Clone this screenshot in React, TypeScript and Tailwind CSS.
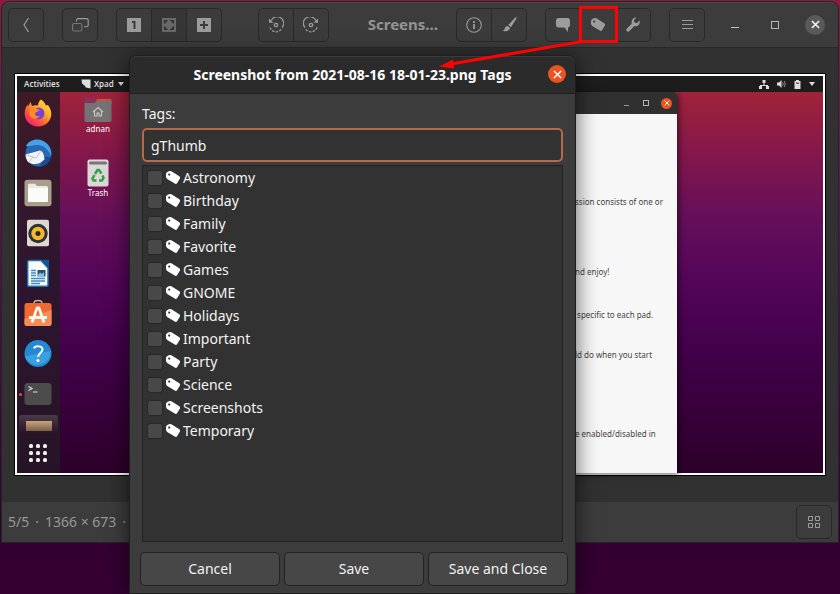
import type { ReactNode } from 'react';

const TAGS = [
  'Astronomy',
  'Birthday',
  'Family',
  'Favorite',
  'Games',
  'GNOME',
  'Holidays',
  'Important',
  'Party',
  'Science',
  'Screenshots',
  'Temporary',
];

const PAD_LINES = [
  { text: 'ssion consists of one or', gap: 'mt-[82px]' },
  { text: 'nd enjoy!', gap: 'mt-[58px]' },
  { text: ' specific to each pad.', gap: 'mt-[31px]' },
  { text: 'ld do when you start', gap: 'mt-[28px]' },
  { text: 'e enabled/disabled in', gap: 'mt-[67px]' },
];

function TagIcon({ className }: { className?: string }) {
  return (
    <svg width="14" height="13" viewBox="0 0 14 13" className={className}>
      <path
        fill="currentColor"
        fillRule="evenodd"
        d="M1.800.7C3.200-.1 5-.1 6.200.7l7.100 4.600c.8.6 1 1.500.5 2.400l-2.600 4.400c-.5.900-1.500 1.100-2.400.500L1.200 8C.4 7.400 0 6.600 0 5.600V3C0 2 .8 1.200 1.800.7zM3.200 2.500a1.100 1.100 0 1 0 0 2.200 1.100 1.100 0 0 0 0-2.200z"
      />
    </svg>
  );
}

function ToolButton({ label, active, children }: { label: string; active?: boolean; children: ReactNode }) {
  return (
    <button
      type="button"
      aria-label={label}
      className={`flex h-full w-[34px] items-center justify-center first:rounded-l-[4px] last:rounded-r-[4px] ${active ? 'bg-[#363636] text-[#686868]' : 'bg-[#3c3c3c] text-[#9c9c9c]'}`}
    >
      {children}
    </button>
  );
}

function Group({ children, className = '' }: { children: ReactNode; className?: string }) {
  return (
    <div className={`flex h-[34px] shrink-0 gap-px rounded-[5px] border border-[#292929] bg-[#292929] ${className}`}>
      {children}
    </div>
  );
}

function RotateIcon({ flip }: { flip?: boolean }) {
  return (
    <svg width="16" height="16" viewBox="0 0 16 16" fill="none" stroke="currentColor" className={flip ? '-scale-x-100' : ''}>
      <path d="M3.200 3.600A6.500 6.500 0 1 1 14 10.500" strokeWidth="1.200" />
      <path d="M2 10.500A6.500 6.500 0 0 0 13.500 12" strokeWidth="1.200" strokeDasharray="2.500 1.200" />
      <path d="M1 1.500v4.300h4.500z" fill="currentColor" stroke="none" />
      <circle cx="8" cy="8" r="1.700" strokeWidth="1.300" />
    </svg>
  );
}

function CloseCross({ size }: { size: number }) {
  return (
    <svg width={size} height={size} viewBox="0 0 10 10" stroke="#fff" strokeWidth="1.600">
      <path d="M1 1l8 8M9 1L1 9" />
    </svg>
  );
}

function HeaderBar() {
  return (
    <header className="flex h-[46px] items-center gap-[18px] border-b border-[#292929] bg-[#3c3c3c] pl-[6px] pr-[13px] shadow-[inset_0_1px_0_#474747]">
      <Group>
        <ToolButton label="Back">
          <svg width="8" height="16" viewBox="0 0 8 16" fill="none" stroke="currentColor" strokeWidth="1.200">
            <path d="M6.500 1L2 8l4.500 7" />
          </svg>
        </ToolButton>
      </Group>
      <Group>
        <ToolButton label="Switch view">
          <svg width="17" height="14" viewBox="0 0 17 14" fill="none" stroke="currentColor" strokeWidth="1.100">
            <path d="M4.500 3.500V2.200C4.500 1.200 5 .6 6 .6h8.500c1 0 1.700.6 1.700 1.600v5c0 1-.7 1.600-1.700 1.600H12" />
            <rect x=".6" y="5.500" width="9.300" height="7.500" rx="1.500" stroke="#777" />
          </svg>
        </ToolButton>
      </Group>
      <Group>
        <ToolButton label="Zoom 100%">
          <svg width="14" height="14" viewBox="0 0 14 14">
            <path fill="currentColor" fillRule="evenodd" d="M0 0h14v14H0zM5 3v2h1.500v6h2V3z" />
          </svg>
        </ToolButton>
        <ToolButton label="Fit to window" active>
          <svg width="14" height="14" viewBox="0 0 14 14">
            <path fill="currentColor" d="M0 0h14v14H0z" />
            <path fill="#363636" d="M2 2h4L5 3.500 3.500 5 2 6zM12 2v4l-1.500-1L9 3.500 8 2zM12 12H8l1-1.500L10.500 9 12 8zM2 12V8l1.500 1L5 10.500 6 12z" />
            <path fill="currentColor" d="M4.500 4.500h5v5h-5z" />
          </svg>
        </ToolButton>
        <ToolButton label="Zoom in">
          <svg width="14" height="14" viewBox="0 0 14 14">
            <path fill="currentColor" fillRule="evenodd" d="M0 0h14v14H0zM6 3v3H3v2h3v3h2V8h3V6H8V3z" />
          </svg>
        </ToolButton>
      </Group>
      <Group className="ml-[18px]">
        <ToolButton label="Rotate left">
          <RotateIcon />
        </ToolButton>
        <ToolButton label="Rotate right">
          <RotateIcon flip />
        </ToolButton>
      </Group>
      <h1 className="min-w-0 flex-1 whitespace-nowrap text-right text-[15px] font-bold text-[#949494]">Screens...</h1>
      <Group>
        <ToolButton label="Properties">
          <svg width="16" height="16" viewBox="0 0 16 16" fill="none" stroke="currentColor">
            <circle cx="8" cy="8" r="7.300" strokeWidth="1.100" />
            <path d="M8 7v5M8 4v2" strokeWidth="1.800" />
          </svg>
        </ToolButton>
        <ToolButton label="Edit picture">
          <svg width="15" height="15" viewBox="0 0 15 15" fill="currentColor">
            <path d="M13.200.4c.8-.7 1.700.1 1.200 1L9 10.200 6.300 8.100z" />
            <path d="M5.700 8.900l2.400 2c-.3 2.500-3.500 3.700-7.600 3.200 1.500-.4 1.900-1.200 2.200-2.500.3-1.600 1.500-2.700 3-2.700z" />
          </svg>
        </ToolButton>
      </Group>
      <div className="relative">
        <Group>
          <ToolButton label="Comment">
            <svg width="14" height="14" viewBox="0 0 14 14" fill="currentColor">
              <path d="M2.500 0h9C13 0 14 1 14 2.500V7c0 1.500-1 2.500-2.500 2.500H12V14L8.500 9.500h-6C1 9.500 0 8.500 0 7V2.500C0 1 1 0 2.500 0z" />
            </svg>
          </ToolButton>
          <ToolButton label="Tags">
            <TagIcon />
          </ToolButton>
          <ToolButton label="Tools">
            <svg width="14" height="15" viewBox="0 0 14 15" fill="currentColor">
              <path d="M10.500.6L8 3l.4 2.600 2.600.5 2.600-2.500c.8 3-.9 5.500-3.600 5.700-.8.100-1.300 0-1.700-.200L3.500 14c-.8.900-2 .9-2.700.2-.8-.8-.7-1.900.2-2.700l4.700-4.800C4.900 3 7.500 0 10.500.6z" />
            </svg>
          </ToolButton>
        </Group>
        {/* red marker round the tag button, with its pointer to the dialog */}
        <div className="pointer-events-none absolute -top-[2px] left-[34px] z-20 h-[37px] w-[39px] border-[3px] border-[#fd0303]">
          <svg width="144" height="30" viewBox="0 0 144 30" className="absolute -left-[143px] top-[30px] max-w-none">
            <path d="M143 2.500L12 25" stroke="#fd0303" strokeWidth="3" />
            <path d="M0 27.500l14-7 1 9z" fill="#fd0303" />
          </svg>
        </div>
      </div>
      <Group>
        <ToolButton label="Menu">
          <svg width="11" height="10" viewBox="0 0 11 10" stroke="currentColor">
            <path d="M0 .5h11M0 4.500h11M0 8.500h11" />
          </svg>
        </ToolButton>
      </Group>
      <div className="flex shrink-0 items-center gap-5 pl-[2px]">
        <button type="button" aria-label="Minimize" className="flex size-5 items-end justify-center pb-[7px]">
          <span className="h-px w-2 bg-[#c0c0c0]" />
        </button>
        <button type="button" aria-label="Maximize" className="flex size-5 items-center justify-center">
          <span className="size-2 border border-[#b8b8b8]" />
        </button>
        <button type="button" aria-label="Close" className="flex size-5 items-center justify-center rounded-full bg-[#5a5a5a]">
          <CloseCross size={9} />
        </button>
      </div>
    </header>
  );
}

function DockIcon({ name }: { name: string }) {
  return (
    <svg width="28" height="28" viewBox="0 0 28 28">
      {name === 'firefox' && (
        <>
          <defs>
            <linearGradient id="fox" x1="1" y1="0" x2=".2" y2="1">
              <stop offset="0" stopColor="#fff04a" />
              <stop offset=".4" stopColor="#ffb029" />
              <stop offset=".7" stopColor="#ff5a35" />
              <stop offset="1" stopColor="#f01480" />
            </linearGradient>
          </defs>
          <path
            fill="url(#fox)"
            d="M17 .5c3 2 4 4 5 6l2-.5c2 3 3.500 6 3.300 9.500C27 22 21.500 27.500 14 27.500S.7 22 .7 14.500C.7 10.500 2 8 3.500 5.500l.5 2L6.500 3l1.500 4c2-1 4-1 6-.5 0-2 1-4.500 3-6z"
          />
          <circle cx="14.500" cy="14.500" r="6" fill="#7c3fd4" />
          <path fill="#ff8a28" d="M6 9c3-1 5-1 7 1l3 1-5 3c0 3 2 4 5 3-3 4-8 3-10 0-1.500-2.500-1-5 0-8z" />
        </>
      )}
      {name === 'mail' && (
        <>
          <circle cx="14.500" cy="14.500" r="13" fill="#2868b4" />
          <path fill="#45a2e8" d="M2 7C5 1 13-1 19 2c6 3 9 9 8 15-2-6-8-12-15-11-4 0-7 2-10 1z" />
          <path fill="#1b4b92" d="M20 18l7 0c-1 5-5 9-11 10z" />
          <path fill="#f3f4f7" d="M1.500 15.500L16 11.500c2 0 4 3 4.500 9L16 24c-5 2-9 1-12-1-1.500-2-2.500-5-2.500-7.500z" />
          <path fill="none" stroke="#b9c3d3" d="M2 16l10 3 5-7M5 23l4-5" />
        </>
      )}
      {name === 'files' && (
        <>
          <rect x=".5" y=".8" width="27" height="26.500" rx="3" fill="#a99d8b" />
          <path fill="#ece9e4" d="M4 6c0-.8.5-1.200 1.200-1.200h6L13 7h9.500c1 0 1.500.5 1.500 1.500v13c0 1-.5 1.500-1.500 1.500h-17c-1 0-1.500-.5-1.500-1.500z" />
          <path fill="#fbfbfa" d="M4 9h20v12.500c0 1-.5 1.500-1.500 1.500h-17c-1 0-1.500-.5-1.500-1.500z" />
        </>
      )}
      {name === 'music' && (
        <>
          <rect x="3" y=".8" width="22" height="26.500" rx="2" fill="#ded9d0" />
          <circle cx="14" cy="14.500" r="9.700" fill="#2e3035" />
          <circle cx="14" cy="14.500" r="6.700" fill="#f4b92b" />
          <circle cx="14" cy="14.500" r="2.500" fill="#26272b" />
        </>
      )}
      {name === 'writer' && (
        <>
          <path fill="#fafafa" stroke="#1b72b8" strokeWidth="1.500" d="M5 1.500h12l7 7.500v17c0 .8-.5 1.300-1.300 1.300H5c-.8 0-1.300-.5-1.300-1.300V3c0-.8.5-1.500 1.300-1.500z" />
          <path fill="#14588f" d="M17.500.7H25V8.500z" />
          <path stroke="#3b8ccb" strokeWidth="1.500" d="M7 11.500h5M7 14h5M7 16.500h5M7 19.500h14M7 22h14M7 24.500h9" />
          <path fill="#354d65" d="M13.500 11h8v6.500h-8z" />
          <path fill="#7ec1f5" d="M14 16l2-2.500 2 1.500 2-2v4.500h-6z" />
        </>
      )}
      {name === 'software' && (
        <>
          <path fill="none" stroke="#c6b495" strokeWidth="1.500" d="M10 5.500V4C10 .5 18 .5 18 4v1.500" />
          <rect x=".5" y="4" width="27" height="23" rx="2.500" fill="#f0692f" />
          <path fill="#f58c57" d="M.5 20l27-9v13.500c0 1.500-1 2.500-2.500 2.500H3c-1.500 0-2.500-1-2.500-2.500z" />
          <path fill="none" stroke="#fff6ee" strokeWidth="2.800" strokeLinejoin="round" d="M8 23.500l5-14.500h2l5 14.500M5 18.500h18" />
        </>
      )}
      {name === 'help' && (
        <>
          <circle cx="14" cy="14.500" r="13.500" fill="#2489d4" />
          <path fill="#3a9fe3" d="M.7 17.500l26-5.500a13.500 13.500 0 0 1-26 5.500z" />
          <path fill="none" stroke="#fff" strokeWidth="2" d="M10 9.500c1-3 8.500-3 8.500 1 0 3-4 3.500-4.500 7.500" />
          <circle cx="14" cy="21.500" r="1.500" fill="#fff" />
        </>
      )}
      {name === 'terminal' && (
        <>
          <rect x=".5" y="4" width="27" height="22" rx="3" fill="#4c4c4c" />
          <path fill="none" stroke="#ddd" strokeWidth="1.200" d="M4.500 7.500l3.500 2-3.500 2M9 13h4.500" />
        </>
      )}
    </svg>
  );
}

function Dock() {
  return (
    <nav className="flex w-[43px] shrink-0 flex-col bg-gradient-to-b from-[#3e1a26] via-[#2d1530] to-[#261426] pt-px">
      {['firefox', 'mail', 'files', 'music', 'writer', 'software', 'help', 'terminal'].map((name) => (
        <div key={name} className="relative flex h-10 items-center justify-center pr-px">
          {name === 'terminal' && <span className="absolute left-[2px] top-5 size-[3px] rounded-full bg-[#e95420]" />}
          <DockIcon name={name} />
        </div>
      ))}
      <div className="mx-[2px] mt-[2px] flex h-[18px] justify-center rounded-t-[3px] bg-gradient-to-b from-[#4b3948] to-[#281528]">
        <span className="mt-[6px] h-[10px] w-[26px] bg-gradient-to-b from-[#cba57a] to-[#776049]" />
      </div>
      <div className="flex h-10 items-center justify-center pr-px">
        <svg width="20" height="20" viewBox="0 0 20 20" fill="#eee">
          {[3, 10, 17].map((y) => [3, 10, 17].map((x) => <rect key={`${x}-${y}`} x={x - 2} y={y - 2} width="4" height="4" rx="1.500" />))}
        </svg>
      </div>
    </nav>
  );
}

function DesktopIcons() {
  return (
    <div className="flex w-[76px] shrink-0 flex-col items-center pt-[5px] text-[8px] leading-[12px] text-white">
      <svg width="28" height="26" viewBox="0 0 28 26">
        <path fill="#8c2f5c" d="M.5 5V2C.5 1 1 .5 2 .5h9L14 3v3H.5z" />
        <path fill="#d94d30" d="M13 2h13c1 0 1.500.5 1.500 1.500V7H11z" />
        <path fill="#747272" d="M.5 6h10l3-2.500h14V23c0 1.500-.7 2-2 2h-23c-1.300 0-2-.5-2-2z" />
        <path fill="none" stroke="#c9c6c6" strokeWidth="1.100" d="M9 15l5-4.500 5 4.500M10.500 14v5H13v-3h2v3h2.500v-5" />
      </svg>
      <span>adnan</span>
      <svg width="22" height="28" viewBox="0 0 22 28" className="mt-6">
        <rect x=".5" y=".5" width="21" height="27" rx="2" fill="#dad9d8" />
        <rect x="2" y="2.500" width="18" height="3" rx="1.500" fill="#777" />
        <g fill="none" stroke="#35a046" strokeWidth="2.500">
          <path d="M8 15l2.500-4h1.500l2.500 3.500" />
          <path d="M15.500 16.500l1 2.500-1.500 2.500h-3" />
          <path d="M9.500 21.500H6.500l-1-2L7.500 16" />
        </g>
      </svg>
      <span>Trash</span>
    </div>
  );
}

function PadWindow() {
  return (
    <section className="z-0 ml-auto mr-[146px] flex w-[118px] flex-col shadow-[2px_2px_6px_#0008]">
      <div className="flex h-[22px] items-center justify-end gap-3 rounded-tr-[4px] bg-[#303030] pr-[5px]">
        <span className="mt-1 h-px w-[5px] bg-[#999]" />
        <span className="ml-[2px] size-[6px] border border-[#b5b5b5]" />
        <span className="flex size-[11px] items-center justify-center rounded-full bg-[#e95420]">
          <CloseCross size={6} />
        </span>
      </div>
      <div className="flex-1 overflow-hidden bg-[#f7f7f7] pl-4 text-[8px] leading-[12px] text-[#444]">
        {PAD_LINES.map(({ text, gap }) => (
          <p key={text} className={`whitespace-pre ${gap}`}>
            {text}
          </p>
        ))}
      </div>
    </section>
  );
}

function Photo() {
  return (
    <div className="border border-black bg-white p-[2px]">
      <div className="flex flex-col">
        <div className="flex h-4 items-center bg-[#1d1d1d] px-[7px] text-[8px] font-semibold text-[#dcdcdc]">
          <span className="w-[57px]">Activities</span>
          <svg width="10" height="10" viewBox="0 0 10 10" className="mr-[3px]">
            <path fill="#ddd" d="M.500.500h9v9L5 8.500 3.500 6.500 1 4.500z" />
          </svg>
          Xpad
          <svg width="6" height="4" viewBox="0 0 6 4" className="ml-1">
            <path fill="#ddd" d="M0 0h6L3 4z" />
          </svg>
          <div className="ml-auto flex items-center gap-2 pr-px">
            <svg width="10" height="9" viewBox="0 0 10 9" fill="#ddd">
              <path d="M3.500 0h3v3h-3zM0 6h3v3H0zM7 6h3v3H7zM4.500 3h1v2h-1zM1 5h8v1H1z" />
            </svg>
            <svg width="9" height="8" viewBox="0 0 9 8">
              <path fill="#ddd" d="M0 2.500h2L4.500 0v8L2 5.500H0z" />
              <path fill="none" stroke="#999" d="M5.500 2.500c.8 1 .8 2 0 3M7 1c1.500 2 1.500 4 0 6" />
            </svg>
            <svg width="7" height="9" viewBox="0 0 7 9">
              <path fill="#ddd" d="M2 0h3v1h1.500v8H.5V1H2z" />
              <path fill="#666" d="M2 2.500h3v1.500H2z" />
            </svg>
            <svg width="6" height="4" viewBox="0 0 6 4">
              <path fill="#ddd" d="M0 0h6L3 4z" />
            </svg>
          </div>
        </div>
        <div className="flex bg-[linear-gradient(#a0243a,#86184a_15%,#650f5a_33%,#540558_50%,#42004a_68%,#2c0029)]">
          <Dock />
          <DesktopIcons />
          <PadWindow />
        </div>
      </div>
    </div>
  );
}

function TagsDialog() {
  return (
    <form
      role="dialog"
      aria-labelledby="dialog-title"
      className="absolute left-[129px] top-[55px] z-10 w-[447px] rounded-t-[8px] border border-[#1e1e1e] bg-[#3c3c3c] text-sm text-[#f2f2f2] shadow-[0_2px_22px_#0009]"
    >
      <div className="relative flex h-[38px] items-center justify-center rounded-t-[7px] border-b border-[#202020] bg-[#2b2b2b] shadow-[inset_0_1px_0_#3b3b3b]">
        <h2 id="dialog-title" className="font-bold text-white">
          Screenshot from 2021-08-16 18-01-23.png Tags
        </h2>
        <button
          type="button"
          aria-label="Close dialog"
          className="absolute right-[9px] top-[9px] flex size-[18px] items-center justify-center rounded-full bg-[#e95420]"
        >
          <CloseCross size={9} />
        </button>
      </div>
      <div className="px-3 pt-[10px]">
        <label htmlFor="tags" className="block leading-[20px]">
          Tags:
        </label>
        <input
          id="tags"
          type="text"
          defaultValue="gThumb"
          className="mt-1 block h-[34px] w-full rounded-[5px] border-2 border-[#b6694b] bg-[#323232] px-[7px] outline-none"
        />
        <ul className="mt-[3px] h-[377px] border border-[#222] bg-[#323232]">
          {TAGS.map((tag) => (
            <li key={tag}>
              <label className="flex h-[23px] items-center pl-1">
                <input
                  type="checkbox"
                  className="size-4 shrink-0 appearance-none rounded-[3px] border border-[#272727] bg-[#484848] checked:bg-[#e95420]"
                />
                <TagIcon className="mx-[3px] text-white" />
                {tag}
              </label>
            </li>
          ))}
        </ul>
      </div>
      <div className="grid grid-cols-3 gap-1 pb-[7px] pl-[10px] pr-[7px] pt-[10px]">
        {['Cancel', 'Save', 'Save and Close'].map((label) => (
          <button key={label} type="button" className="h-[34px] rounded-[5px] border border-[#232323] bg-[#474747]">
            {label}
          </button>
        ))}
      </div>
    </form>
  );
}

export default function App() {
  return (
    <div className="relative min-h-screen overflow-hidden bg-gradient-to-b from-[#8e1a3e] via-[#5b0a58] via-45% to-[#340032] to-90% px-px pt-px font-['Noto_Sans',sans-serif]">
      <main className="overflow-hidden rounded-t-[8px] border border-[#252525] bg-[#313131]">
        <HeaderBar />
        <div className="px-3 pb-[26px] pt-[25px]">
          <Photo />
        </div>
        <footer className="flex h-10 items-center justify-between bg-[#3c3c3c] px-[6px] text-sm text-[#989898]">
          <div className="flex gap-[6px]">
            <span>5/5</span>
            <span>·</span>
            <span>1366 × 673</span>
            <span>·</span>
          </div>
          <Group>
            <ToolButton label="Show thumbnails">
              <svg width="12" height="12" viewBox="0 0 12 12" fill="none" stroke="currentColor">
                <path d="M.5.5h4v4h-4zM7.500.5h4v4h-4zM.5 7.500h4v4h-4zM7.500 7.500h4v4h-4z" />
              </svg>
            </ToolButton>
          </Group>
        </footer>
      </main>
      <TagsDialog />
    </div>
  );
}
